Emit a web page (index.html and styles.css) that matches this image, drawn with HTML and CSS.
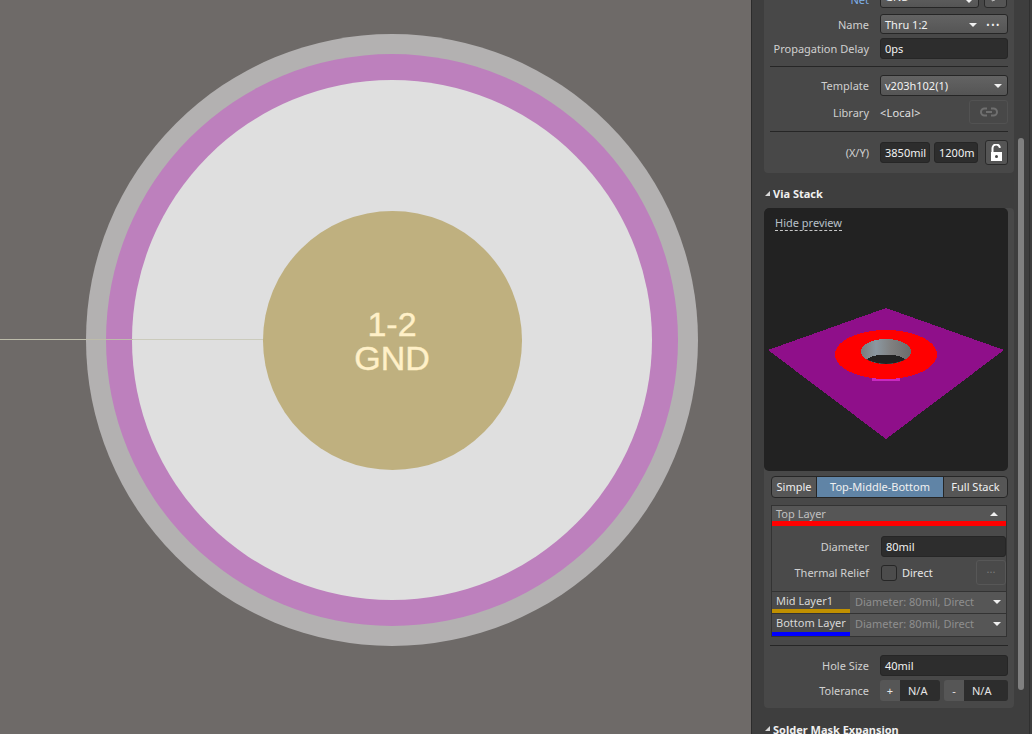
FILE: index.html
```html
<!DOCTYPE html>
<html lang="en">
  <head>
    <meta charset="UTF-8" />
    <title>Via Properties</title>
    <link rel="stylesheet" href="styles.css">
  </head>
  <body>
    <main class="canvas">
      <div class="ring ring-mask">
        <div class="ring ring-pad">
          <div class="ring ring-top">
            <div class="ring ring-hole">1-2<br />GND</div>
          </div>
        </div>
      </div>
      <div class="track track-a"></div>
      <div class="track track-b"></div>
    </main>

    <aside class="panel">
      <div class="scrollbar"></div>
      <section class="card card-first">
        <div class="row row-net">
          <label class="lbl lbl-net">Net</label>
          <div class="field select net-select">GND<span class="caret"></span></div>
          <div class="icon-btn">
            <svg width="12" height="12" viewBox="0 0 12 12"><path d="M2 10 3 7 8 2l2 2-5 5z" fill="none" stroke="#bbb"/></svg>
          </div>
        </div>
        <div class="row row-name">
          <label class="lbl">Name</label>
          <div class="field select">Thru 1:2<span class="caret caret-name"></span><span class="dots">&bull;&bull;&bull;</span></div>
        </div>
        <div class="row row-delay">
          <label class="lbl">Propagation Delay</label>
          <div class="field dark">0ps</div>
        </div>
        <hr class="rule rule-1" />
        <div class="row">
          <label class="lbl">Template</label>
          <div class="field select">v203h102(1)<span class="caret"></span></div>
        </div>
        <div class="row row-lib">
          <label class="lbl">Library</label>
          <div class="lib-value">&lt;Local&gt;</div>
          <div class="link-btn">
            <svg width="18" height="10" viewBox="0 0 18 10"><path d="M7 1.500H4.500a3.500 3.500 0 0 0 0 7H7M11 1.500h2.500a3.500 3.500 0 0 1 0 7H11M6 5h6" fill="none" stroke="#6f6f6f" stroke-width="2"/></svg>
          </div>
        </div>
        <hr class="rule rule-2" />
        <div class="row row-xy">
          <label class="lbl lbl-xy">(X/Y)</label>
          <div class="field dark xy-x">3850mil</div>
          <div class="field dark xy-y">1200m</div>
          <div class="lock-btn">
            <svg width="13" height="18" viewBox="0 0 13 18"><path d="M2.500 8V4.500a3.700 3.700 0 0 1 7.400-.6" fill="none" stroke="#fff" stroke-width="2"/><path d="M1 8h11v9H1z" fill="#fff"/><circle cx="6.500" cy="12.500" r="1.500" fill="#444"/></svg>
          </div>
        </div>
      </section>

      <h2 class="sect-title"><span class="corner"></span>Via Stack</h2>
      <section class="card card-stack">
        <div class="preview">
          <a class="hide-link">Hide preview</a>
          <svg class="via3d" width="244" height="263" viewBox="764 208 244 263" shape-rendering="crispEdges">
            <defs>
              <linearGradient id="barrel" x1="0" x2="1" y1="0" y2="0">
                <stop offset="0" stop-color="#7a7c7b" />
                <stop offset="0.3" stop-color="#8b98a1" />
                <stop offset="0.6" stop-color="#808080" />
                <stop offset="1" stop-color="#6c6c6c" />
              </linearGradient>
              <clipPath id="holeClip"><ellipse cx="886" cy="351.500" rx="25" ry="12.500" /></clipPath>
            </defs>
            <polygon points="886,308 1004,350 886,439 768,350" fill="#8f0f8a" />
            <rect x="872" y="375" width="28" height="6" fill="#c828c0" />
            <ellipse cx="886" cy="354.500" rx="51" ry="24.500" fill="#ff0000" />
            <ellipse cx="886" cy="351.500" rx="25" ry="12.500" fill="url(#barrel)" />
            <ellipse cx="886" cy="367" rx="25" ry="12.500" fill="#222222" clip-path="url(#holeClip)" />
          </svg>
        </div>

        <div class="tabs">
          <div class="tab tab-simple">Simple</div>
          <div class="tab tab-tmb">Top-Middle-Bottom</div>
          <div class="tab tab-full">Full Stack</div>
        </div>

        <div class="layer-box">
          <div class="layer-head">
            <span>Top Layer</span>
            <span class="caret caret-up"></span>
          </div>
          <div class="layer-body">
            <div class="row row-diam">
              <label class="lbl lbl-inner">Diameter</label>
              <div class="field dark">80mil</div>
            </div>
            <div class="row row-thermal">
              <label class="lbl lbl-inner">Thermal Relief</label>
              <span class="check"></span>
              <span class="check-text">Direct</span>
              <div class="more-btn">...</div>
            </div>
          </div>
          <div class="layer-row">
            <div class="layer-name name-mid">Mid Layer1</div>
            <div class="layer-val">Diameter: 80mil, Direct<span class="caret"></span></div>
          </div>
          <div class="layer-row">
            <div class="layer-name name-bot">Bottom Layer</div>
            <div class="layer-val">Diameter: 80mil, Direct<span class="caret"></span></div>
          </div>
        </div>

        <hr class="rule rule-3" />
        <div class="row">
          <label class="lbl">Hole Size</label>
          <div class="field dark">40mil</div>
        </div>
        <div class="row row-tol">
          <label class="lbl">Tolerance</label>
          <div class="tol">
            <span class="tol-sign">+</span><span class="tol-val">N/A</span>
          </div>
          <div class="tol">
            <span class="tol-sign">-</span><span class="tol-val">N/A</span>
          </div>
        </div>
      </section>

      <h2 class="sect-title sect-solder"><span class="corner"></span>Solder Mask Expansion</h2>
    </aside>
  </body>
</html>
```

FILE: styles.css
```css
html,
body {
  margin: 0;
  height: 734px;
  overflow: hidden;
}
body {
  display: flex;
  font-family: "Noto Sans", sans-serif;
  font-size: 11px;
  color: #e6e6e6;
  background: #3d3d3d;
}

/* pcb view */
.canvas {
  position: relative;
  width: 751px;
  height: 734px;
  background: #6e6a68;
  overflow: hidden;
}
.ring {
  display: flex;
  align-items: center;
  justify-content: center;
  border-radius: 50%;
  flex: none;
}
.ring-mask {
  position: absolute;
  left: 86px;
  top: 34px;
  width: 612px;
  height: 612px;
  background: #b3b1b1;
}
.ring-pad {
  width: 572px;
  height: 572px;
  background: #bd80bd;
}
.ring-top {
  width: 520px;
  height: 520px;
  background: #dfdfdf;
}
.ring-hole {
  width: 259px;
  height: 259px;
  box-sizing: border-box;
  padding-top: 2px;
  background: #bfb07f;
  color: #fff0c8;
  font-family: "Liberation Sans", sans-serif;
  font-size: 34px;
  line-height: 34px;
  text-align: center;
  -webkit-text-stroke: 0.4px #fff0c8;
}
.track {
  position: absolute;
  top: 339px;
  height: 1px;
}
.track-a {
  left: 0;
  width: 133px;
  background: #bdbcaa;
}
.track-b {
  left: 133px;
  width: 130px;
  background: #cbcbbc;
}

/* properties panel */
.panel {
  position: relative;
  flex: 1;
  border-left: 1px solid #2c2c2c;
  background: #3e3e3e;
}
.panel::after {
  content: "";
  position: absolute;
  left: 277px;
  top: 0;
  width: 1px;
  height: 734px;
  background: #303030;
}
.scrollbar {
  position: absolute;
  left: 266px;
  top: 138px;
  width: 6px;
  height: 552px;
  border-radius: 3px;
  background: #808080;
}
.card {
  width: 250px;
  margin-left: 12px;
  background: #484848;
  border-radius: 4px;
  box-sizing: border-box;
  padding-right: 6px;
}
.card-first {
  margin-top: -10px;
  height: 183px;
  padding-top: 0;
}
.card-stack {
  height: 500px;
}
.sect-title {
  margin: 0;
  height: 35px;
  padding-left: 21px;
  line-height: 42px;
  font-size: 11px;
  font-weight: 700;
  color: #f0f0f0;
  position: relative;
}
.sect-solder {
  height: 26px;
  line-height: 44px;
}
.corner {
  position: absolute;
  left: 13px;
  top: 18px;
  width: 0;
  height: 0;
  border-left: 5px solid transparent;
  border-bottom: 5px solid #d8d8d8;
}
.row {
  display: flex;
  align-items: center;
  height: 21px;
  margin-top: 4px;
}
.lbl {
  width: 105px;
  padding-right: 11px;
  flex: none;
  text-align: right;
  color: #d0d0d0;
  white-space: nowrap;
}
.field {
  flex: 1;
  height: 21px;
  line-height: 20px;
  padding: 0 4px;
  box-sizing: border-box;
  border: 1px solid #262626;
  border-radius: 3px;
  color: #f2f2f2;
  position: relative;
  white-space: nowrap;
}
.dark {
  background: #2d2d2d;
}
.select {
  background: linear-gradient(#636363, #555555);
}
.caret {
  position: absolute;
  right: 5px;
  top: 8px;
  width: 0;
  height: 0;
  border-left: 4px solid transparent;
  border-right: 4px solid transparent;
  border-top: 4px solid #f0f0f0;
}
.caret-name {
  right: 30px;
}
.caret-up {
  position: static;
  margin-right: 4px;
  border-top: 0;
  border-bottom: 4px solid #f0f0f0;
}
.dots {
  position: absolute;
  right: 6px;
  top: 0;
  font-size: 9px;
  letter-spacing: 1.500px;
}
.row-net {
  height: 18px;
  margin-top: 0;
}
.net-select {
  flex: none;
  width: 99px;
  height: 18px;
  margin-right: 5px;
  line-height: 12px;
}
.lbl-net {
  color: #7fb0e8;
}
.icon-btn {
  width: 23px;
  height: 18px;
  box-sizing: border-box;
  border: 1px solid #2a2a2a;
  border-radius: 3px;
  background: #555;
  display: flex;
  justify-content: center;
}
.row-name {
  margin-top: 6px;
  height: 20px;
}
.row-name .field {
  height: 20px;
}
.rule {
  height: 1px;
  border: 0;
  margin: 0;
  background: #262626;
  margin-left: 6px;
  margin-right: 0;
}
.rule-1 {
  margin-top: 7px;
  margin-bottom: 8px;
}
.rule-1 + .row {
  margin-top: 0;
}
.row-lib {
  height: 24px;
  margin-top: 4px;
}
.lib-value {
  flex: 1;
  letter-spacing: 0.2px;
  color: #e0e0e0;
}
.link-btn {
  width: 39px;
  height: 24px;
  box-sizing: border-box;
  border: 1px solid #525252;
  border-radius: 3px;
  display: flex;
  align-items: center;
  justify-content: center;
}
.rule-2 {
  margin-top: 7px;
}
.row-xy {
  margin-top: 10px;
  height: 21px;
}
.xy-x {
  flex: none;
  width: 50px;
  margin-right: 4px;
}
.xy-y {
  flex: none;
  width: 44px;
  margin-right: 7px;
}
.lock-btn {
  width: 23px;
  height: 25px;
  box-sizing: border-box;
  border: 1px solid #2a2a2a;
  border-radius: 3px;
  background: #555;
  display: flex;
  align-items: center;
  justify-content: center;
}
.preview {
  position: relative;
  height: 263px;
  margin-top: 0;
  background: #222222;
  border-radius: 5px;
  overflow: hidden;
}
.via3d {
  display: block;
}
.hide-link {
  position: absolute;
  left: 11px;
  top: 8px;
  line-height: 14px;
  border-bottom: 1px dashed #c8c8c8;
  color: #b8c0c8;
}
.tabs {
  display: flex;
  height: 22px;
  margin: 5px 0 0 7px;
  box-sizing: border-box;
  border: 1px solid #262626;
  border-radius: 4px;
  overflow: hidden;
  background: #565656;
}
.tab {
  text-align: center;
  line-height: 20px;
  color: #f0f0f0;
}
.tab-simple {
  width: 44px;
}
.tab-tmb {
  width: 128px;
  background: #6084a6;
  border-left: 1px solid #262626;
  border-right: 1px solid #262626;
  box-sizing: border-box;
}
.tab-full {
  flex: 1;
}
.layer-box {
  margin: 7px 1px 0 7px;
  border: 1px solid #333;
  background: #4a4a4a;
}
.layer-head {
  display: flex;
  align-items: center;
  justify-content: space-between;
  height: 20px;
  box-sizing: border-box;
  padding: 0 4px;
  background: #565656;
  border-bottom: 5px solid #ff0000;
  color: #c0c0c0;
}
.layer-body {
  height: 65px;
  border-bottom: 1px solid #333;
}
.lbl-inner {
  width: 97px;
  padding-right: 12px;
}
.row-diam {
  margin-top: 0;
  padding-top: 10px;
}
.row-thermal {
  margin-top: 3px;
  height: 25px;
}
.check {
  width: 14px;
  height: 14px;
  border: 1px solid #262626;
  border-radius: 3px;
  background: #4c4c4c;
}
.check-text {
  flex: 1;
  margin-left: 5px;
}
.more-btn {
  width: 30px;
  height: 25px;
  box-sizing: border-box;
  border: 1px solid #575757;
  border-radius: 3px;
  text-align: center;
  color: #7a7a7a;
}
.layer-row {
  display: flex;
  height: 22px;
  border-bottom: 1px solid #333;
  box-sizing: border-box;
  background: #565656;
}
.layer-row:last-child {
  border-bottom: 0;
}
.layer-name {
  width: 78px;
  box-sizing: border-box;
  padding-left: 4px;
  line-height: 18px;
  background: #4a4a4a;
  color: #d8d8d8;
}
.name-mid {
  border-bottom: 4px solid #c09000;
}
.name-bot {
  border-bottom: 4px solid #0000ff;
}
.layer-val {
  flex: 1;
  position: relative;
  padding-left: 5px;
  line-height: 20px;
  color: #8e8e8e;
}
.rule-3 {
  margin-top: 8px;
}
.rule-3 + .row {
  margin-top: 9px;
}
.tol {
  display: flex;
  flex: none;
  width: 60px;
  height: 21px;
  line-height: 21px;
  border-radius: 3px;
  overflow: hidden;
  margin-right: 4px;
}
.tol:last-child {
  width: 64px;
  margin-right: 0;
}
.tol-sign {
  width: 20px;
  text-align: center;
  background: #565656;
}
.tol-val {
  flex: 1;
  padding-left: 8px;
  background: #2d2d2d;
}
```
